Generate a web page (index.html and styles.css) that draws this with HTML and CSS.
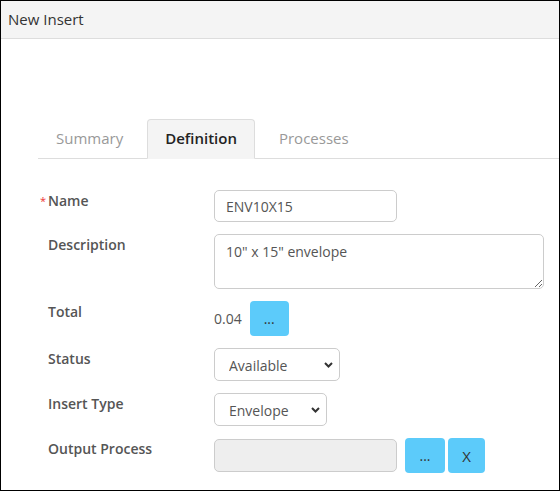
FILE: index.html
```html
<!DOCTYPE html>
<html lang="en">
<head>
<meta charset="UTF-8">
<meta name="viewport" content="width=device-width, initial-scale=1.0">
<title>New Insert</title>
<link rel="stylesheet" href="styles.css">
</head>
<body>
<div class="dialog">
<div class="dialog-header">New Insert</div>
<div class="dialog-body">
<ul class="tabs">
<li>Summary</li>
<li class="active">Definition</li>
<li>Processes</li>
</ul>
<div class="form">
<div class="row">
<label class="required">Name</label>
<div class="control"><input type="text" class="name-input" value="ENV10X15"></div>
</div>
<div class="row">
<label>Description</label>
<div class="control"><textarea class="desc-input">10" x 15" envelope</textarea></div>
</div>
<div class="row">
<label>Total</label>
<div class="control"><span class="total">0.04</span><button class="btn btn-more">...</button></div>
</div>
<div class="row">
<label>Status</label>
<div class="control">
<div class="select-wrap status-select">
<select><option>Available</option><option>Unavailable</option></select>
<svg class="chevron" width="9" height="6" viewBox="0 0 9 6"><path d="M1 1 L4.5 4.5 L8 1" fill="none" stroke="#333" stroke-width="2"/></svg>
</div>
</div>
</div>
<div class="row">
<label>Insert Type</label>
<div class="control">
<div class="select-wrap type-select">
<select><option>Envelope</option><option>Insert</option></select>
<svg class="chevron" width="9" height="6" viewBox="0 0 9 6"><path d="M1 1 L4.5 4.5 L8 1" fill="none" stroke="#333" stroke-width="2"/></svg>
</div>
</div>
</div>
<div class="row">
<label>Output Process</label>
<div class="control">
<input type="text" class="process-input" disabled>
<button class="btn btn-more btn-output">...</button>
<button class="btn btn-clear">X</button>
</div>
</div>
</div>
</div>
</div>
</body>
</html>
```

FILE: styles.css
```css
body {
margin: 0;
font-family: "Open Sans", "Liberation Sans", sans-serif;
background-color: #fff;
}
.dialog {
width: 560px;
height: 491px;
box-sizing: border-box;
border: 1px solid #000;
overflow: hidden;
}
.dialog-header {
height: 37px;
line-height: 36px;
padding-left: 7px;
font-size: 15px;
color: #333;
background-color: #f4f4f4;
border-bottom: 1px solid #ddd;
}
.dialog-body {
padding: 80px 0 0 37px;
}
.tabs {
display: flex;
list-style: none;
margin: 0;
padding: 0;
border-bottom: 1px solid #ddd;
}
.tabs li {
height: 38px;
line-height: 37px;
padding: 0 19px;
margin-right: 4px;
margin-bottom: -1px;
font-size: 15px;
color: #999;
border: 1px solid transparent;
border-radius: 4px 4px 0 0;
}
.tabs li:first-child {
padding-left: 18px;
border-left: 0;
}
.tabs li.active {
padding: 0 17px;
color: #222;
font-weight: 600;
background-color: #f4f4f4;
border-color: #ddd;
border-bottom-color: #f4f4f4;
}
.form {
padding: 31px 0 0 10px;
display: flex;
flex-direction: column;
gap: 12px;
}
.row {
display: flex;
align-items: flex-start;
}
.row label {
position: relative;
width: 166px;
flex-shrink: 0;
padding-top: 1px;
font-size: 14px;
font-weight: 600;
color: #555;
line-height: 20px;
}
.required::before {
content: "*";
position: absolute;
left: -8px;
top: 1px;
color: #e33;
font-size: 11px;
font-weight: 400;
}
.control {
display: flex;
align-items: center;
}
input, textarea, select {
font-family: "Open Sans", "Liberation Sans", sans-serif;
font-size: 14px;
color: #555;
border: 1px solid #ccc;
border-radius: 5px;
box-sizing: border-box;
outline: none;
}
.name-input {
width: 183px;
height: 32px;
padding: 0 11px;
}
.desc-input {
width: 330px;
height: 55px;
padding: 7px 11px 5px;
resize: vertical;
display: block;
}
.total {
font-size: 14px;
color: #555;
margin-right: 8px;
}
.btn {
height: 35px;
border: none;
border-radius: 4px;
background-color: #5ccbfa;
color: #333;
font-family: "Open Sans", "Liberation Sans", sans-serif;
font-size: 14px;
cursor: pointer;
padding: 0;
}
.btn-more {
width: 39px;
}
.btn-output {
width: 40px;
margin-left: 8px;
}
.btn-clear {
width: 37px;
margin-left: 3px;
font-size: 15px;
}
.select-wrap {
position: relative;
}
.select-wrap select {
appearance: none;
-webkit-appearance: none;
height: 33px;
padding: 2px 14px 0;
background-color: #fff;
display: block;
}
.status-select select {
width: 126px;
}
.type-select select {
width: 113px;
}
.chevron {
position: absolute;
right: 7px;
top: 14px;
pointer-events: none;
}
.process-input {
width: 183px;
height: 33px;
background-color: #eee;
}
```
